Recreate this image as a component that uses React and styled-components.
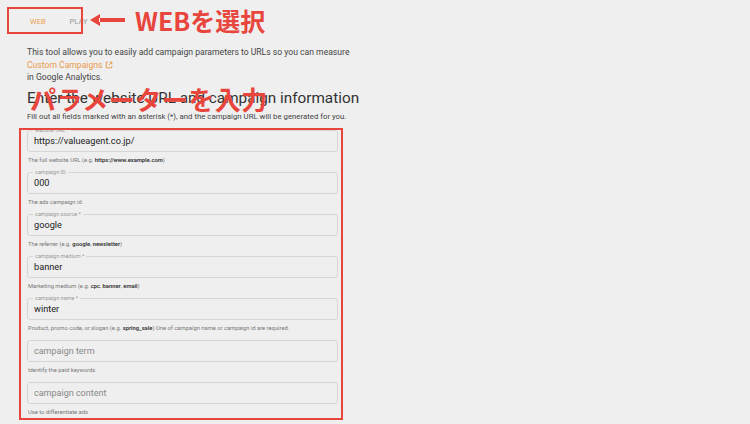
import React from "react";
import styled, { createGlobalStyle } from "styled-components";

const G = createGlobalStyle`
  html,body{margin:0;background:#efefef;font-family:Roboto,"Noto Sans CJK JP",sans-serif;}
`;
const Page = styled.div`position:relative;width:750px;height:424px;overflow:hidden;padding:13px 0 0 27px;box-sizing:border-box;color:#333;`;
const Tabs = styled.div`display:flex;gap:24px;padding-left:3px;font-size:7.5px;height:16px;align-items:center;`;
const Tab = styled.span`color:${p=>p.active?"#f0a050":"#999"};`;
const Intro = styled.div`margin-top:17px;font-size:8.6px;line-height:12.5px;color:#444;`;
const Link = styled.span`color:#e99a4a;display:inline-flex;align-items:center;gap:3px;`;
const H = styled.div`font-size:15.3px;color:#333;margin-top:4px;line-height:20px;`;
const Sub = styled.div`font-size:7.8px;color:#444;margin-top:4px;`;
const Form = styled.div`margin-top:9px;width:311px;display:flex;flex-direction:column;`;
const Field = styled.div`position:relative;border:1px solid #d6d6d6;border-radius:3px;height:20px;display:flex;align-items:center;padding-left:6px;font-size:${p=>p.ph?"9px":"9.2px"};color:${p=>p.ph?"#888":"#222"};`;
const Label = styled.span`position:absolute;top:-4px;left:5px;padding:0 2px;background:#efefef;font-size:5.5px;color:#999;line-height:7px;`;
const Help = styled.div`font-size:5.8px;line-height:8px;color:#777;margin:4px 0 8px 1px;b{color:#333;font-weight:600}`;
const Box = styled.div`position:absolute;border:2px solid #e8453c;`;
const Note = styled.div`position:absolute;color:#e8453c;font-weight:700;font-family:"Noto Sans CJK JP",sans-serif;`;

const fields=[
 ["website URL *","https://valueagent.co.jp/",<>The full website URL (e.g. <b>https://www.example.com</b>)</>],
 ["campaign ID","000","The ads campaign id."],
 ["campaign source *","google",<>The referrer (e.g. <b>google</b>, <b>newsletter</b>)</>],
 ["campaign medium *","banner",<>Marketing medium (e.g. <b>cpc</b>, <b>banner</b>, <b>email</b>)</>],
 ["campaign name *","winter",<>Product, promo code, or slogan (e.g. <b>spring_sale</b>) One of campaign name or campaign id are required.</>],
 [null,"campaign term","Identify the paid keywords"],
 [null,"campaign content","Use to differentiate ads"],
];

export default function App(){
 return <Page><G/>
  <Tabs><Tab active>WEB</Tab><Tab>PLAY</Tab></Tabs>
  <Intro>This tool allows you to easily add campaign parameters to URLs so you can measure<br/>
   <Link>Custom Campaigns <svg width="8" height="8" viewBox="0 0 10 10" fill="none" stroke="#e99a4a" strokeWidth="1.2"><path d="M4 1.5H1.5v7h7V6M6 1.5h2.5V4M8.5 1.5L4.5 5.5"/></svg></Link><br/>in Google Analytics.</Intro>
  <H>Enter the website URL and campaign information</H>
  <Sub>Fill out all fields marked with an asterisk (*), and the campaign URL will be generated for you.</Sub>
  <Form>{fields.map(([l,v,h],i)=><React.Fragment key={i}>
    <Field ph={!l}>{l&&<Label>{l}</Label>}{v}</Field><Help>{h}</Help></React.Fragment>)}</Form>
  <Box style={{left:7,top:7,width:72,height:23}}/>
  <svg style={{position:"absolute",left:88,top:13}} width="38" height="14" viewBox="0 0 38 14"><path d="M12 1L2 7l10 6z M11 5h26v4H11z" fill="#e8453c"/></svg>
  <Note style={{left:135,top:2,fontSize:25}}>WEBを選択</Note>
  <Note style={{left:30,top:80,fontSize:26,letterSpacing:0.5}}>パラメーターを入力</Note>
  <Box style={{left:19,top:128,width:320,height:288}}/>
 </Page>;
}
